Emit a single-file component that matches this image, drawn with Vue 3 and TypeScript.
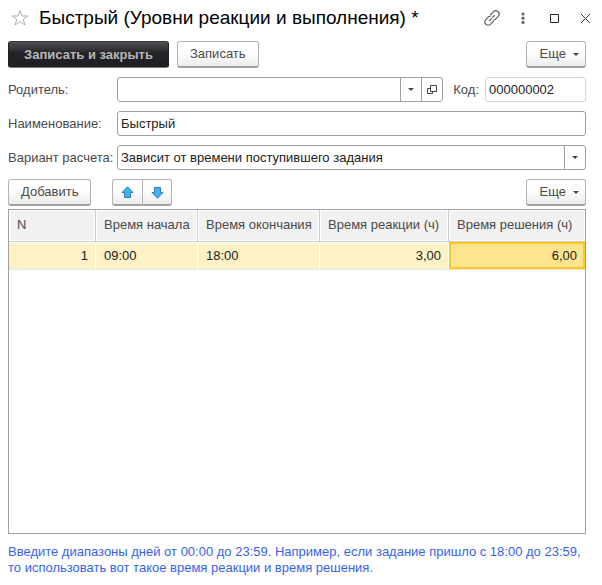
<script setup lang="ts">
import { ref } from 'vue'

interface LevelRow {
  n: number
  start: string
  end: string
  reaction: string
  solution: string
}

const title = 'Быстрый (Уровни реакции и выполнения) *'
const parent = ref('')
const code = ref('000000002')
const name = ref('Быстрый')
const variant = ref('Зависит от времени поступившего задания')
const rows = ref<LevelRow[]>([
  { n: 1, start: '09:00', end: '18:00', reaction: '3,00', solution: '6,00' },
])
</script>

<template>
  <main class="window">
    <header class="titlebar">
      <button class="icon-btn star" type="button" aria-label="В избранное">
        <svg width="18" height="18" viewBox="0 0 18 18">
          <path d="M9 1.5 L11 7 H16.8 L12.2 10.4 L14 16 L9 12.6 L4 16 L5.8 10.4 L1.2 7 H7 Z" fill="#fff" stroke="#a9b1ba" />
        </svg>
      </button>
      <h1>{{ title }}</h1>
      <div class="window-tools">
        <button class="icon-btn" type="button" aria-label="Получить ссылку">
          <svg width="18" height="18" viewBox="0 0 18 18" fill="none" stroke="#606060" stroke-width="1.2" stroke-linecap="round">
            <path d="M7.6 5.6 L10.4 2.8 A3.1 3.1 0 0 1 15.2 7.4 L12.3 10.3 A3.1 3.1 0 0 1 10.4 11" />
            <path d="M10.4 12.4 L7.6 15.2 A3.1 3.1 0 0 1 2.8 10.6 L5.7 7.7 A3.1 3.1 0 0 1 7.6 7" />
            <path d="M6.6 11.4 L11.4 6.6" stroke-dasharray="2.6 1.6" />
          </svg>
        </button>
        <button class="icon-btn" type="button" aria-label="Меню">
          <svg width="18" height="18" viewBox="0 0 18 18" fill="#666">
            <circle cx="9" cy="5" r="1.6" /><circle cx="9" cy="9.2" r="1.6" /><circle cx="9" cy="13.4" r="1.6" />
          </svg>
        </button>
        <button class="icon-btn" type="button" aria-label="Развернуть">
          <svg width="18" height="18" viewBox="0 0 18 18" fill="none" stroke="#222">
            <path d="M5.5 5.5 H13.5 V13.5 H5.5 Z" />
          </svg>
        </button>
        <button class="icon-btn" type="button" aria-label="Закрыть">
          <svg width="18" height="18" viewBox="0 0 18 18" fill="none" stroke="#333">
            <path d="M5 5 L14 14 M14 5 L5 14" />
          </svg>
        </button>
      </div>
    </header>

    <div class="commands">
      <button class="btn primary" type="button">Записать и закрыть</button>
      <button class="btn" type="button">Записать</button>
      <button class="btn more" type="button">Еще<i class="caret"></i></button>
    </div>

    <form class="fields" @submit.prevent>
      <label for="parent">Родитель:</label>
      <div class="parent-line">
        <div class="box">
          <input id="parent" v-model="parent" type="text" />
          <button class="segment" type="button" aria-label="Выбрать"><i class="caret"></i></button>
          <button class="segment" type="button" aria-label="Открыть">
            <svg width="10" height="10" viewBox="0 0 10 10" fill="none" stroke="#444">
              <path d="M3.5 0.5 H9.5 V6.5 H3.5 Z M3.5 3.5 H0.5 V8.5 H5.5 V6.5" />
            </svg>
          </button>
        </div>
        <label for="code">Код:</label>
        <div class="box code"><input id="code" v-model="code" type="text" /></div>
      </div>

      <label for="name">Наименование:</label>
      <div class="box"><input id="name" v-model="name" type="text" /></div>

      <label for="variant">Вариант расчета:</label>
      <div class="box">
        <select id="variant" v-model="variant">
          <option>Зависит от времени поступившего задания</option>
        </select>
        <span class="segment"><i class="caret"></i></span>
      </div>
    </form>

    <div class="commands table-commands">
      <button class="btn" type="button">Добавить</button>
      <div class="btn-pair">
        <button class="btn" type="button" aria-label="Переместить вверх">
          <svg width="13" height="13" viewBox="0 0 13 13">
            <path d="M6.5 0.8 L12 6.5 H9.5 V11.5 H3.5 V6.5 H1 Z" fill="#45b0ee" stroke="#2c7fb0" />
          </svg>
        </button>
        <button class="btn" type="button" aria-label="Переместить вниз">
          <svg width="13" height="13" viewBox="0 0 13 13">
            <path d="M6.5 12.2 L12 6.5 H9.5 V1.5 H3.5 V6.5 H1 Z" fill="#45b0ee" stroke="#2c7fb0" />
          </svg>
        </button>
      </div>
      <button class="btn more" type="button">Еще<i class="caret"></i></button>
    </div>

    <div class="grid">
      <table>
        <colgroup>
          <col class="c-n" /><col class="c-start" /><col class="c-end" /><col class="c-reaction" /><col />
        </colgroup>
        <thead>
          <tr>
            <th scope="col">N</th>
            <th scope="col">Время начала</th>
            <th scope="col">Время окончания</th>
            <th scope="col">Время реакции (ч)</th>
            <th scope="col">Время решения (ч)</th>
          </tr>
        </thead>
        <tbody>
          <tr v-for="row in rows" :key="row.n">
            <td class="num">{{ row.n }}</td>
            <td>{{ row.start }}</td>
            <td>{{ row.end }}</td>
            <td class="num">{{ row.reaction }}</td>
            <td class="num current">{{ row.solution }}</td>
          </tr>
        </tbody>
      </table>
    </div>

    <p class="hint">
      Введите диапазоны дней от 00:00 до 23:59. Например, если задание пришло с 18:00 до 23:59,
      то использовать вот такое время реакции и время решения.
    </p>
  </main>
</template>

<style>
body {
  margin: 0;
  background: #fff;
}
</style>

<style scoped>
.window,
.window * {
  box-sizing: border-box;
}
.window {
  display: flex;
  flex-direction: column;
  min-height: 100vh;
  padding: 0 16px 9px 8px;
  font: 13px/16px "Liberation Sans", Arial, sans-serif;
  color: #4a4a4a;
}
button,
input,
select {
  margin: 0;
  font: inherit;
  color: inherit;
}
.titlebar {
  display: flex;
  align-items: center;
  height: 36px;
  margin-right: -8px;
}
h1 {
  flex: 1;
  margin: 0 0 0 10px;
  font-size: 19px;
  line-height: 24px;
  font-weight: 400;
  color: #000;
  white-space: nowrap;
}
.icon-btn {
  display: flex;
  width: 18px;
  height: 18px;
  padding: 0;
  border: 0;
  background: none;
}
.star {
  margin-left: 3px;
}
.window-tools {
  display: flex;
  gap: 13px;
}
.commands {
  display: flex;
  gap: 8px;
  margin-top: 5px;
}
.btn {
  display: flex;
  align-items: center;
  justify-content: center;
  min-width: 60px;
  height: 27px;
  padding: 0 12px;
  border: 1px solid #b4b4b4;
  border-bottom: 2px solid #a0a0a0;
  border-radius: 3px;
  background: linear-gradient(#fff 40%, #ececec);
  white-space: nowrap;
}
.primary {
  width: 161px;
  border-color: #38383a #202024 #77777a;
  border-bottom-width: 1px;
  background: linear-gradient(#505054, #242428 45%, #1f1f23);
  color: #b8b8b8;
  font-weight: 700;
}
.more {
  gap: 7px;
  margin-left: auto;
  padding: 0 6px 0 13px;
}
.caret {
  width: 0;
  height: 0;
  border: 3px solid transparent;
  border-top-color: #444;
  border-bottom: 0;
}
.fields {
  display: grid;
  grid-template-columns: 109px minmax(0, 1fr);
  row-gap: 9px;
  margin-top: 9px;
}
.fields label {
  line-height: 25px;
  white-space: nowrap;
}
.parent-line {
  display: flex;
}
.parent-line .box {
  flex: 1;
}
.parent-line label {
  margin: 0 6px 0 10px;
}
.box {
  display: flex;
  height: 25px;
  min-width: 0;
  border: 1px solid #a0a0a0;
  border-radius: 3px;
  background: #fff;
  color: #222;
}
.parent-line .code {
  flex: 0 0 101px;
  border-color: #d6d6d6;
}
input,
select {
  flex: 1;
  width: 100%;
  min-width: 0;
  padding: 0 3px;
  border: 0;
  outline: 0;
  background: transparent;
  appearance: none;
}
.segment {
  display: flex;
  flex: none;
  align-items: center;
  justify-content: center;
  width: 21px;
  padding: 0;
  border: 0;
  border-left: 1px solid #a0a0a0;
  background: none;
  pointer-events: none;
}
button.segment {
  pointer-events: auto;
}
.table-commands {
  margin-top: 9px;
}
.btn-pair {
  display: flex;
  margin-left: 13px;
}
.btn-pair .btn {
  width: 30px;
  min-width: 0;
  padding: 0;
}
.btn-pair .btn:first-child {
  border-radius: 3px 0 0 3px;
  border-right: 0;
}
.btn-pair .btn:last-child {
  border-radius: 0 3px 3px 0;
}
.grid {
  flex: 1;
  margin-top: 3px;
  border: 1px solid #a0a0a0;
}
table {
  width: 100%;
  table-layout: fixed;
  border-collapse: separate;
  border-spacing: 0;
}
.c-n {
  width: 87px;
}
.c-start {
  width: 102px;
}
.c-end {
  width: 122px;
}
.c-reaction {
  width: 129px;
}
th,
td {
  padding: 0 8px;
  text-align: left;
  white-space: nowrap;
}
th {
  height: 32px;
  padding-bottom: 1px;
  border-right: 1px solid #ccc;
  border-bottom: 1px solid #ccc;
  background: #f1f1f1;
  box-shadow: inset 0 0 0 1px #fff;
  font-weight: 400;
}
th:last-child {
  border-right: 0;
}
td {
  height: 28px;
  border-bottom: 1px solid #e8e8e8;
  background: #fdf1c6;
  box-shadow: inset -1px 1px #fff;
  color: #222;
}
td.num {
  text-align: right;
}
td.current {
  background: #fee48f;
  box-shadow: inset 0 0 0 2px #fdc820;
}
.hint {
  margin: 10px 0 0;
  color: #3563ec;
}
</style>
